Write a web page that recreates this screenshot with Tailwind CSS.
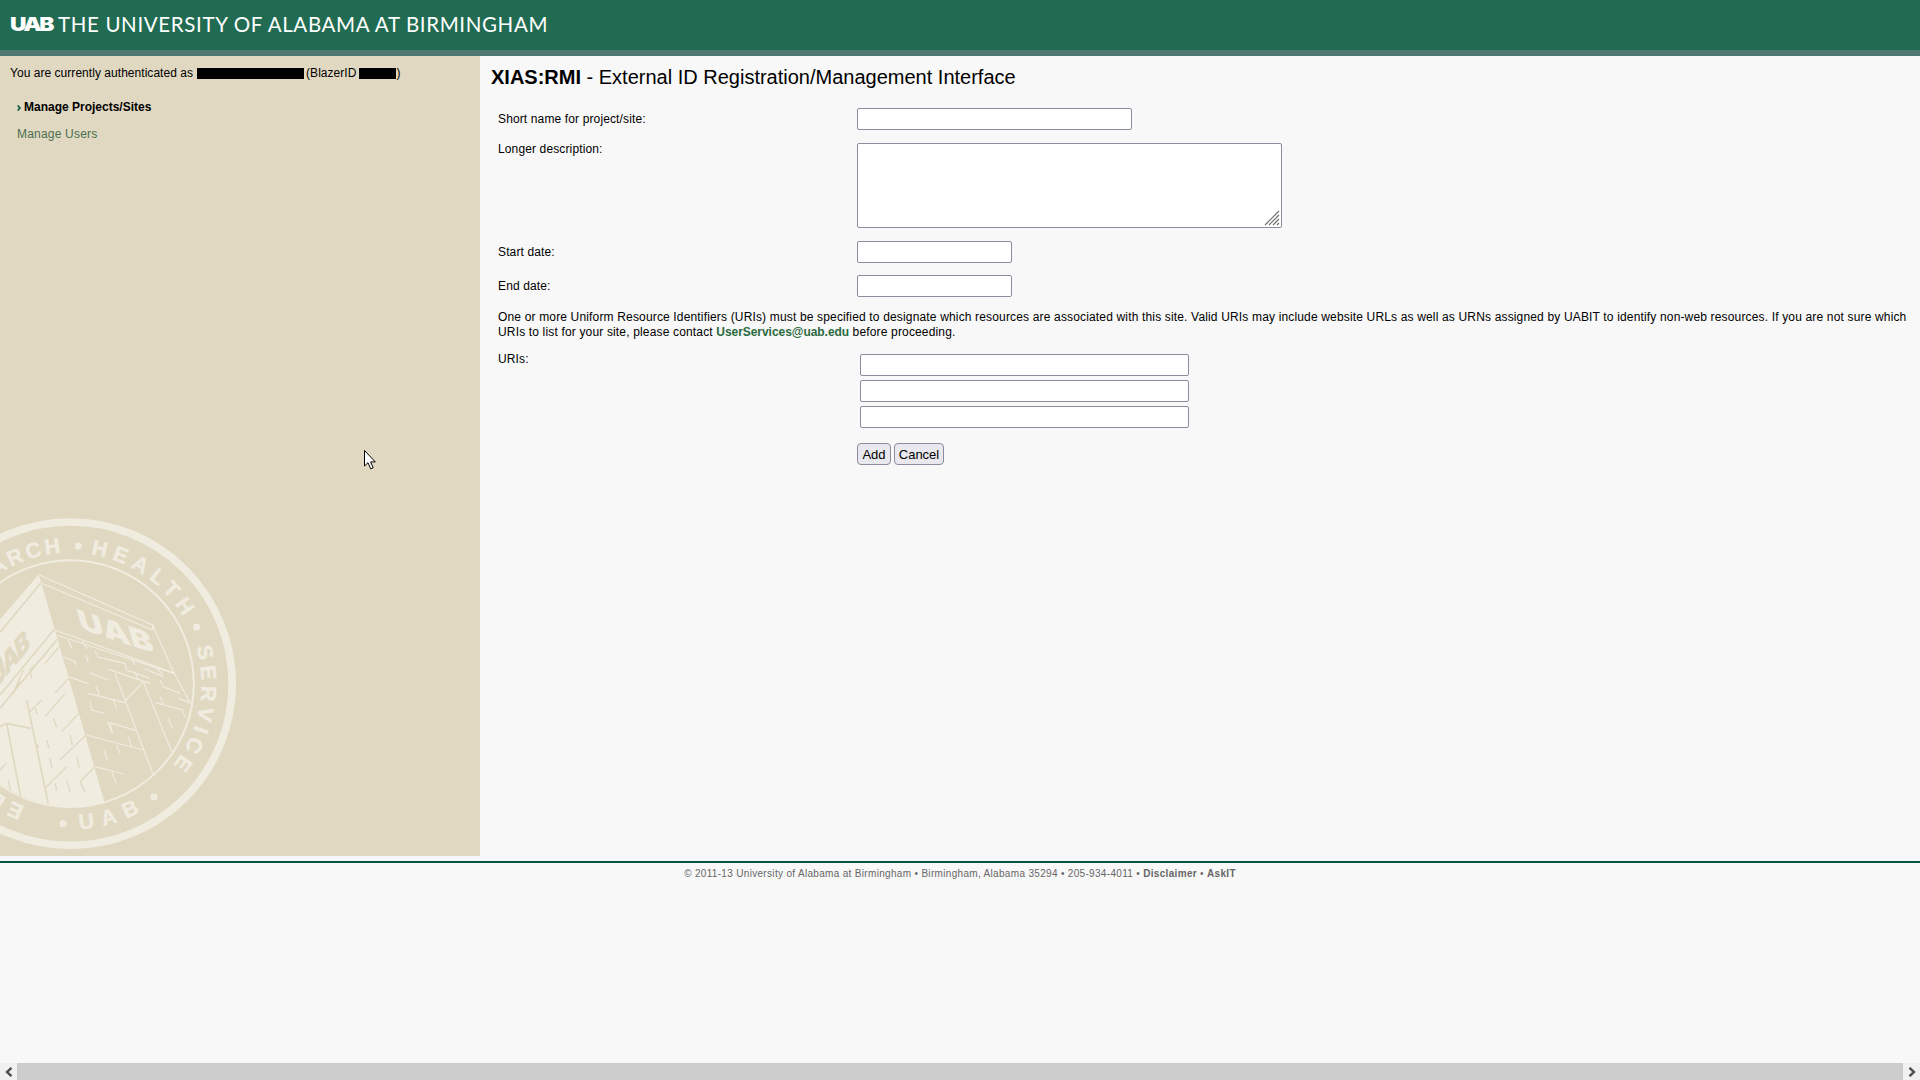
<!DOCTYPE html>
<html lang="en">
<head>
    <meta charset="UTF-8">
    <title>XIAS:RMI - External ID Registration/Management Interface</title>
    <script src="https://cdn.jsdelivr.net/npm/@tailwindcss/browser@4"></script>
</head>
<body class="bg-[#f8f8f8] h-[1080px] w-[1920px] overflow-hidden flex flex-col font-['Liberation_Sans',Arial,sans-serif] text-[12px] leading-[15px] text-black">
    <!-- Header -->
    <header class="h-[50px] bg-[#206b52] flex items-center pl-[10px] pb-[2px] shrink-0 text-white">
        <span class="w-[44px] font-['Inter',sans-serif] font-black text-[19px] leading-none tracking-[-2px] scale-x-120 origin-left">UAB</span>
        <span class="ml-[4px] font-['Lato',sans-serif] text-[20.5px] leading-none tracking-[0.64px]">THE UNIVERSITY OF ALABAMA AT BIRMINGHAM</span>
    </header>
    <div class="h-[6px] bg-[#4f7873] shrink-0"></div>

    <div class="flex h-[800px] shrink-0">
        <!-- Sidebar -->
        <aside class="relative w-[480px] shrink-0 bg-[#e0d8c0] overflow-hidden">
            <!-- Seal -->
            <svg class="absolute left-0 top-[444px]" width="260" height="370" viewBox="0 0 780 1110" fill="none" stroke="#f0ece0">
                <defs>
                    <path id="arcTop" d="M211.5 944A393 393 0 1 1 211.6 944"/>
                    <path id="arcBottom" d="M61.7 962.6A438 438 0 0 0 547 832.6"/>
                </defs>
                <circle cx="211.5" cy="551" r="485" stroke-width="23"/>
                <circle cx="211.5" cy="551" r="370" stroke-width="6"/>
                <g fill="#f0ece0" stroke="#f0ece0" stroke-width="1.5" font-family="'Liberation Sans',sans-serif" font-weight="700" font-size="64">
                    <text><textPath href="#arcTop" startOffset="785" textLength="420">RESEARCH</textPath></text>
                    <text><textPath href="#arcTop" startOffset="1295" textLength="345">HEALTH</textPath></text>
                    <text><textPath href="#arcTop" startOffset="1740" textLength="375">SERVICE</textPath></text>
                    <text><textPath href="#arcTop" startOffset="140" textLength="510">EDUCATION</textPath></text>
                    <text><textPath href="#arcBottom" startOffset="180" textLength="190">UAB</textPath></text>
                    <circle cx="235" cy="138" r="10"/>
                    <circle cx="590" cy="381" r="10"/>
                    <circle cx="462" cy="891" r="10"/>
                    <circle cx="189" cy="971" r="10"/>
                </g>
                <!-- left face of the building -->
                <path fill="#f0ece0" stroke="none" d="M116 224L123 246L313 905A367 367 0 0 1 0 851V358Z"/>
                <g stroke="#e0d8c0" stroke-width="4">
                    <path stroke-width="5" d="M122 250L0 397M163 388L0 585M172 418L0 625"/>
                    <path d="M178 440L135 490M135 465L90 510L95 535M70 510L40 580M60 545L35 585M205 535L165 580M195 580L135 650M125 600L85 640M105 625L112 642M237 640L185 695M160 655L170 680M258 705L180 780M210 705L217 735M140 720L147 745M150 775L156 805M230 770L238 805M200 800L135 865M165 850L170 872M200 840L210 875M285 800L240 845L256 877M25 840L31 872M20 790L-5 815"/>
                    <path stroke-width="5" d="M80 600L145 912M20 670L62 890M20 670L92 685M115 735L110 745M0 680L20 670"/>
                </g>
                <text transform="matrix(0.64 -0.77 0.27 0.96 88 445)" text-anchor="end" fill="#e0d8c0" stroke="none" font-family="'Inter',sans-serif" font-weight="900" font-size="84" letter-spacing="-6">UAB</text>
                <!-- right face of the building -->
                <g stroke-width="3.5">
                    <path d="M118 225L458 375L520 515L572 612M125 250L458 390M165 390L525 520M170 405L525 522M458 375L458 390"/>
                    <path d="M205 530L267 552M258 705L430 750M285 800L370 822M345 520L458 820M430 545L515 755M430 545L378 600"/>
                    <path d="M205 420L215 445M245 420L262 445M190 470L225 485L228 495M258 465L265 488M285 452L295 472L375 490L380 510L450 535M395 475L405 495M430 505L490 530M470 505L490 525M480 540L490 560L540 580M268 518L325 540M325 508L450 550M405 515L415 540M265 580L375 608M290 560L297 585M340 600L350 625M270 605L275 630L312 640M322 665L338 700L330 668L408 692M385 710L395 740M350 735L360 760M312 750L323 782M335 815L348 850M465 608L550 630M480 590L490 612M535 595L568 607M545 630L555 650M503 655L517 683"/>
                </g>
                <text transform="matrix(0.95 0.31 0.28 0.96 243 388)" fill="#f0ece0" stroke="none" font-family="'Inter',sans-serif" font-weight="900" font-size="90" textLength="235" lengthAdjust="spacingAndGlyphs">UAB</text>
            </svg>

            <div class="relative pl-[10px] pt-[10px] flex items-center h-[25px] tracking-[0.04px]">
                You are currently authenticated as
                <span class="ml-[4px] w-[107px] h-[11px] bg-black"></span>
                <span class="ml-[2px]">(BlazerID</span>
                <span class="ml-[3px] w-[37px] h-[11px] bg-black"></span>
                <span>)</span>
            </div>
            <nav class="relative mt-[19px] pl-[17px]">
                <div class="flex items-center h-[15px] font-bold">
                    <svg width="4" height="6" viewBox="0 0 4 6" class="mr-[3px]" fill="none" stroke="#00563f" stroke-width="1.6"><path d="M0.7 0.5L3 3L0.7 5.5"/></svg>
                    Manage Projects/Sites
                </div>
                <a class="block mt-[12px] tracking-[0.2px] text-[#4b6f4f]">Manage Users</a>
            </nav>
        </aside>

        <!-- Main form -->
        <main class="flex-1 pl-[11px] pr-[13px]">
            <h1 class="mt-[10px] h-[22px] text-[20px] leading-[22px]"><b>XIAS:RMI</b> - External ID Registration/Management Interface</h1>
            <div class="pl-[7px] mt-[20px] tracking-[0.13px]">
                <div class="flex h-[22px] items-center">
                    <label class="w-[359px]">Short name for project/site:</label>
                    <input type="text" class="w-[275px] h-[22px] bg-white border border-[#8c8c9c] rounded-[2px]">
                </div>
                <div class="flex mt-[13px]">
                    <label class="w-[359px] -mt-[1px]">Longer description:</label>
                    <div class="relative">
                        <textarea class="block w-[425px] h-[85px] bg-white border border-[#8c8c9c] rounded-[2px] resize-none"></textarea>
                        <svg class="absolute right-[2px] bottom-[2px]" width="16" height="16" viewBox="0 0 16 16" stroke="#6e6e6e" stroke-width="1.2"><path d="M1 15L15 1M5 15L15 5M9 15L15 9M13 15L15 13"/></svg>
                    </div>
                </div>
                <div class="flex h-[22px] items-center mt-[13px]">
                    <label class="w-[359px]">Start date:</label>
                    <input type="text" class="w-[155px] h-[22px] bg-white border border-[#8c8c9c] rounded-[2px]">
                </div>
                <div class="flex h-[22px] items-center mt-[12px]">
                    <label class="w-[359px]">End date:</label>
                    <input type="text" class="w-[155px] h-[22px] bg-white border border-[#8c8c9c] rounded-[2px]">
                </div>
                <p class="mt-[13px] tracking-[0.16px]">One or more Uniform Resource Identifiers (URIs) must be specified to designate which resources are associated with this site. Valid URIs may include website URLs as well as URNs assigned by UABIT to identify non-web resources. If you are not sure which URIs to list for your site, please contact <a class="text-[#2b6b3f] font-bold tracking-[-0.05px]">UserServices@uab.edu</a> before proceeding.</p>
                <div class="flex mt-[14px]">
                    <label class="w-[362px] -mt-[2px]">URIs:</label>
                    <div class="flex flex-col gap-[4px]">
                        <input type="text" class="w-[329px] h-[22px] bg-white border border-[#8c8c9c] rounded-[2px]">
                        <input type="text" class="w-[329px] h-[22px] bg-white border border-[#8c8c9c] rounded-[2px]">
                        <input type="text" class="w-[329px] h-[22px] bg-white border border-[#8c8c9c] rounded-[2px]">
                    </div>
                </div>
                <div class="flex gap-[3px] mt-[15px] ml-[359px] text-[13px] tracking-normal">
                    <button class="w-[34px] h-[22px] bg-[#e8e8ee] border border-[#8c8c9c] rounded-[4px]">Add</button>
                    <button class="w-[50px] h-[22px] bg-[#e8e8ee] border border-[#8c8c9c] rounded-[4px]">Cancel</button>
                </div>
            </div>
        </main>
    </div>

    <!-- Footer -->
    <footer class="mt-[5px] border-t-2 border-[#00563f] pt-[4px] text-center text-[10px] leading-[13px] tracking-[0.32px] text-[#666666] shrink-0">
        © 2011-13 University of Alabama at Birmingham • Birmingham, Alabama 35294 • 205-934-4011 • <b>Disclaimer</b> • <b>AskIT</b>
    </footer>

    <!-- Horizontal scrollbar -->
    <div class="mt-auto h-[17px] flex bg-[#f1f1f1] shrink-0">
        <div class="w-[17px] flex items-center justify-center">
            <svg width="8" height="10" viewBox="0 0 8 10" fill="none" stroke="#505050" stroke-width="2.4"><path d="M6.5 0.8L2 5L6.5 9.2"/></svg>
        </div>
        <div class="flex-1 bg-[#cdcdcd]"></div>
        <div class="w-[17px] flex items-center justify-center">
            <svg width="8" height="10" viewBox="0 0 8 10" fill="none" stroke="#505050" stroke-width="2.4"><path d="M1.5 0.8L6 5L1.5 9.2"/></svg>
        </div>
    </div>

    <!-- Mouse pointer -->
    <svg class="absolute left-[364px] top-[450px]" width="13" height="20" viewBox="0 0 13 20"><path d="M0.5 0.5V16L4 12.7L6.7 18.8L9.2 17.8L6.6 11.9H11.3Z" fill="#fff" stroke="#000"/></svg>
</body>
</html>
